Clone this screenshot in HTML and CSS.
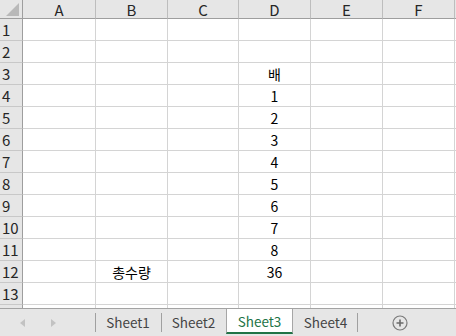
FILE: index.html
```html
<!DOCTYPE html>
<html lang="ko">
<head>
<meta charset="utf-8">
<link rel="stylesheet" href="styles.css">
</head>
<body>
<div class="app">
  <div class="sheet">
    <div class="corner"><svg width="22" height="18" viewBox="0 0 22 18"><polygon points="19,3 19,16 6,16" fill="#b9b9b9"/></svg></div>
    <div class="ch c1">A</div><div class="ch c2">B</div><div class="ch c3">C</div><div class="ch c4">D</div><div class="ch c5">E</div><div class="ch c6">F</div><div class="ch c7"></div>

    <div class="rh">1</div><div class="cell"></div><div class="cell"></div><div class="cell"></div><div class="cell"></div><div class="cell"></div><div class="cell"></div><div class="cell"></div>
    <div class="rh">2</div><div class="cell"></div><div class="cell"></div><div class="cell"></div><div class="cell"></div><div class="cell"></div><div class="cell"></div><div class="cell"></div>
    <div class="rh">3</div><div class="cell"></div><div class="cell"></div><div class="cell"></div><div class="cell">배</div><div class="cell"></div><div class="cell"></div><div class="cell"></div>
    <div class="rh">4</div><div class="cell"></div><div class="cell"></div><div class="cell"></div><div class="cell">1</div><div class="cell"></div><div class="cell"></div><div class="cell"></div>
    <div class="rh">5</div><div class="cell"></div><div class="cell"></div><div class="cell"></div><div class="cell">2</div><div class="cell"></div><div class="cell"></div><div class="cell"></div>
    <div class="rh">6</div><div class="cell"></div><div class="cell"></div><div class="cell"></div><div class="cell">3</div><div class="cell"></div><div class="cell"></div><div class="cell"></div>
    <div class="rh">7</div><div class="cell"></div><div class="cell"></div><div class="cell"></div><div class="cell">4</div><div class="cell"></div><div class="cell"></div><div class="cell"></div>
    <div class="rh">8</div><div class="cell"></div><div class="cell"></div><div class="cell"></div><div class="cell">5</div><div class="cell"></div><div class="cell"></div><div class="cell"></div>
    <div class="rh">9</div><div class="cell"></div><div class="cell"></div><div class="cell"></div><div class="cell">6</div><div class="cell"></div><div class="cell"></div><div class="cell"></div>
    <div class="rh">10</div><div class="cell"></div><div class="cell"></div><div class="cell"></div><div class="cell">7</div><div class="cell"></div><div class="cell"></div><div class="cell"></div>
    <div class="rh">11</div><div class="cell"></div><div class="cell"></div><div class="cell"></div><div class="cell">8</div><div class="cell"></div><div class="cell"></div><div class="cell"></div>
    <div class="rh">12</div><div class="cell"></div><div class="cell">총수량</div><div class="cell"></div><div class="cell">36</div><div class="cell"></div><div class="cell"></div><div class="cell"></div>
    <div class="rh">13</div><div class="cell"></div><div class="cell"></div><div class="cell"></div><div class="cell"></div><div class="cell"></div><div class="cell"></div><div class="cell"></div>
    <div class="rh"></div><div class="cell"></div><div class="cell"></div><div class="cell"></div><div class="cell"></div><div class="cell"></div><div class="cell"></div><div class="cell"></div>
  </div>
  <div class="tabbar">
    <div class="nav">
      <svg width="95" height="27" viewBox="0 0 95 27"><polygon points="25,10 25,18 20,14" fill="#c2c2c2"/><polygon points="51,10 51,18 56,14" fill="#c2c2c2"/></svg>
    </div>
    <div class="tab t1">Sheet1</div>
    <div class="tab t2">Sheet2</div>
    <div class="tab active">Sheet3</div>
    <div class="tab t4">Sheet4</div>
    <div class="add"><svg width="16" height="16" viewBox="0 0 16 16"><circle cx="8" cy="8" r="7" fill="none" stroke="#7a7a7a" stroke-width="1.2"/><path d="M8 4.5v7M4.5 8h7" stroke="#6a6a6a" stroke-width="1.6"/></svg></div>
  </div>
</div>
</body>
</html>
```
FILE: styles.css
```css
html, body {
  margin: 0;
  padding: 0;
  background: #ffffff;
}
.app {
  width: 456px;
  height: 336px;
  overflow: hidden;
  font-family: "Noto Sans CJK KR", "Noto Sans", sans-serif;
}
.sheet {
  height: 308px;
  overflow: hidden;
  display: grid;
  grid-template-columns: 23px 73px 72px 71px 72px 72px 72px 72px;
  grid-template-rows: 19px;
  grid-auto-rows: 22px;
}
.sheet > div {
  box-sizing: border-box;
  display: flex;
  align-items: center;
  justify-content: center;
  font-size: 14px;
  line-height: 1;
  color: #000;
  white-space: nowrap;
  overflow: hidden;
}
.corner {
  background: #e6e6e6;
  border-right: 1px solid #9e9e9e;
  border-bottom: 1px solid #9e9e9e;
}
.corner svg { display: block; }
.ch {
  background: #e6e6e6;
  border-right: 1px solid #bdbdbd;
  border-bottom: 1px solid #9e9e9e;
  color: #262626 !important;
  font-size: 15px !important;
  padding-top: 1px;
}
.rh {
  background: #e6e6e6;
  border-right: 1px solid #9e9e9e;
  border-bottom: 1px solid #c8c8c8;
  justify-content: flex-start !important;
  padding-left: 2px;
  color: #262626 !important;
  font-size: 15px !important;
}
.cell {
  border-right: 1px solid #d4d4d4;
  border-bottom: 1px solid #d4d4d4;
}
.tabbar {
  height: 28px;
  box-sizing: border-box;
  border-top: 1px solid #a3a3a3;
  background: #e6e6e6;
  display: flex;
  align-items: stretch;
}
.nav {
  width: 95px;
  flex: none;
}
.nav svg { display: block; }
.tab {
  flex: none;
  box-sizing: border-box;
  display: flex;
  align-items: center;
  justify-content: center;
  font-size: 13.5px;
  color: #444;
  padding-bottom: 2px;
  position: relative;
}
.tab::before {
  content: "";
  position: absolute;
  left: 0;
  top: 4px;
  bottom: 4px;
  width: 1px;
  background: #a0a0a0;
}
.t1 { width: 66px; }
.t2 { width: 65px; }
.t4 { width: 65px; }
.t4::before { display: none; }
.t4::after {
  content: "";
  position: absolute;
  right: 0;
  top: 4px;
  bottom: 4px;
  width: 1px;
  background: #a0a0a0;
}
.active {
  width: 67px;
  background: #ffffff;
  color: #217346;
  border-left: 1px solid #a6a6a6;
  border-right: 1px solid #a6a6a6;
  border-bottom: 2px solid #217346;
  margin-bottom: 2px;
  padding-bottom: 0;
}
.active::before { display: none; }
.add {
  flex: 1;
  display: flex;
  align-items: center;
  padding-left: 34px;
}
.add svg { display: block; }
```
